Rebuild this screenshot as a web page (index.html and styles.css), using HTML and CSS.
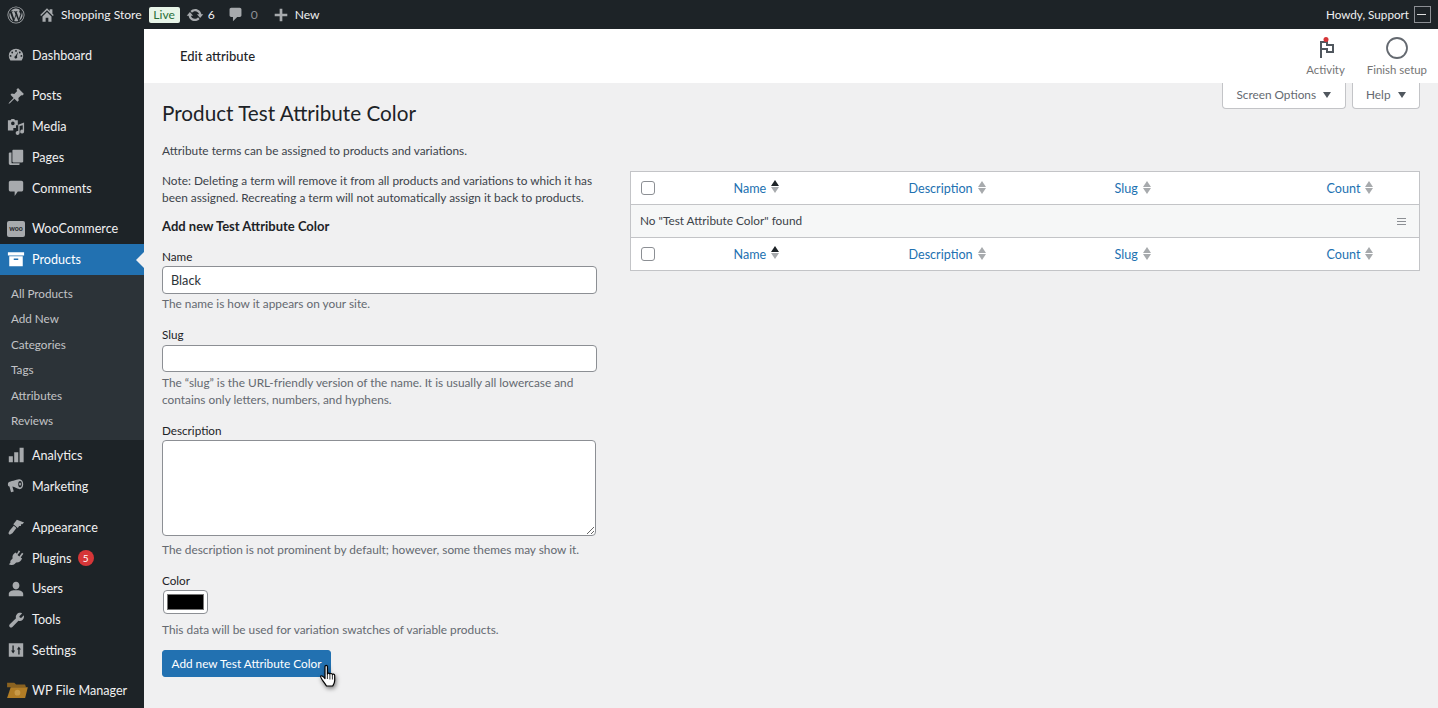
FILE: index.html
```html
<!DOCTYPE html>
<html>
<head>
  <meta charset="utf-8">
  <link rel="stylesheet" href="styles.css">
</head>
<body>
  <div class="adminbar">
    <div class="bar-left">
      <svg class="bar-logo" viewBox="0 0 20 20"><path fill-rule="evenodd" d="M10 .5a9.500 9.500 0 1 1 0 19 9.500 9.500 0 0 1 0-19zm0 .9a8.600 8.600 0 1 0 0 17.200 8.600 8.600 0 0 0 0-17.200zM2.700 10c0 2.900 1.700 5.400 4.100 6.600L3.300 7.100A7.300 7.300 0 0 0 2.700 10zm12.200-.4c0-.9-.3-1.500-.6-2-.4-.6-.7-1.100-.7-1.600 0-.7.500-1.300 1.200-1.300h.1A7.300 7.300 0 0 0 3.900 6h.5c.8 0 1.900-.1 1.900-.1.400 0 .4.600 0 .6 0 0-.4.100-.8.100l2.500 7.600 1.500-4.600-1.100-3-.7-.1c-.4 0-.3-.6 0-.6 0 0 1.200.1 1.900.1s1.900-.1 1.900-.1c.4 0 .4.600 0 .6 0 0-.4.100-.8.100l2.500 7.500.7-2.300c.3-1 .5-1.700.5-2.300zm-4.800 1-2.100 6.100a7.300 7.300 0 0 0 4.500-.1l-2.400-6zm6.300-4v.8c0 .7-.1 1.600-.6 2.600l-2.200 6.300A7.300 7.300 0 0 0 16.400 6.600z"/></svg>
      <svg class="bar-icon home" viewBox="0 0 20 20"><path d="M16 8.500l1.530 1.530-1.060 1.060L10 4.620l-6.470 6.470-1.060-1.060L10 2.500l3 3v-2h3v5zM10 6.750l5 5V17.500h-3.500V13h-3v4.500H5v-5.750z"/></svg>
      <span class="bar-text site-name">Shopping Store</span>
      <span class="live-badge">Live</span>
      <svg class="bar-icon updates" viewBox="0 0 20 20"><path d="M10.200 3.280c3.530 0 6.430 2.610 6.920 6h2.080l-3.500 4-3.500-4h2.320c-.45-1.970-2.210-3.440-4.320-3.440-1.450 0-2.730.71-3.540 1.780L4.950 5.660c1.270-1.440 3.130-2.380 5.250-2.380zm-.400 13.440c-3.520 0-6.430-2.610-6.920-6H.800l3.500-4c1.170 1.330 2.330 2.670 3.500 4H5.480c.45 1.970 2.210 3.440 4.320 3.440 1.450 0 2.730-.71 3.540-1.780l1.710 1.950c-1.270 1.440-3.130 2.390-5.250 2.390z"/></svg>
      <span class="bar-text count">6</span>
      <svg class="bar-icon comment" viewBox="0 0 20 20"><path d="M5 2h10c1.100 0 2 .9 2 2v7c0 1.100-.9 2-2 2h-3l-5 5v-5H5c-1.100 0-2-.9-2-2V4c0-1.100.9-2 2-2z"/></svg>
      <span class="bar-text zero">0</span>
      <svg class="bar-icon plus" viewBox="0 0 20 20"><path d="M8.500 3h3v5.500H17v3h-5.500V17h-3v-5.500H3v-3h5.500z"/></svg>
      <span class="bar-text new">New</span>
    </div>
    <div class="bar-right">
      <span class="bar-text howdy">Howdy, Support</span>
      <span class="avatar"><i></i></span>
    </div>
  </div>

  <div class="wrap">
    <div class="sidebar">
      <a class="menu-item"><svg viewBox="0 0 20 20"><path fill-rule="evenodd" d="M3.760 16h12.480A8 8 0 1 0 3.760 16zM10 4.500a1 1 0 1 1 0 2 1 1 0 0 1 0-2zM5.800 6.200a1 1 0 1 1 0 2 1 1 0 0 1 0-2zm8.400 0a1 1 0 1 1 0 2 1 1 0 0 1 0-2zM4 10a1 1 0 1 1 0 2 1 1 0 0 1 0-2zm12 0a1 1 0 1 1 0 2 1 1 0 0 1 0-2zM12.500 6.500l-1.500 5a1.500 1.500 0 1 1-1.700-.5z"/></svg>Dashboard</a>
      <div class="menu-sep"></div>
      <a class="menu-item"><svg viewBox="0 0 20 20"><path d="M10.440 3.020l1.820-1.820 6.530 6.530-1.820 1.820-1.170-.47-3.170 3.170.42 2.850-1.400 1.400-3.440-3.440-4.700 4.700-1.900 1 1-1.900 4.700-4.700-3.440-3.440 1.400-1.400 2.850.42 3.170-3.170z"/></svg>Posts</a>
      <a class="menu-item"><svg viewBox="0 0 20 20"><path fill-rule="evenodd" d="M1 2.500h3l1-1.500h3l1 1.500h3V8h-2v3H7v3H1zM6.500 4a2 2 0 1 0 0 4 2 2 0 0 0 0-4zM19 5v10a2.200 2.200 0 1 1-1.500-2V8L14 9v7.500a2.200 2.200 0 1 1-1.500-2V7.500z"/></svg>Media</a>
      <a class="menu-item"><svg viewBox="0 0 20 20"><path d="M7 2h10c.5 0 1 .4 1 1v12c0 .5-.5 1-1 1H7c-.5 0-1-.5-1-1V3c0-.6.500-1 1-1zM4 5h1v11c0 .6.400 1 1 1h8v1c0 .500-.4 1-1 1H4c-1 0-2-1-2-2V6c0-.6.400-1 2-1z"/></svg>Pages</a>
      <a class="menu-item"><svg viewBox="0 0 20 20"><path d="M4 2h12c1 0 2 .9 2 2v8c0 1.100-.9 2-2 2h-4l-3.500 5V14H4c-1 0-2-.9-2-2V4c0-1.100 1-2 2-2z"/></svg>Comments</a>
      <div class="menu-sep"></div>
      <a class="menu-item"><span class="woo-icon">woo</span>WooCommerce</a>
      <a class="menu-item current"><svg viewBox="0 0 20 20"><path fill-rule="evenodd" d="M1 2.500h18V6H1zM2.500 7h15v11h-15zM7.500 9.500V11h5V9.500z"/></svg>Products<span class="menu-arrow"></span></a>
      <div class="submenu">
        <a>All Products</a>
        <a>Add New</a>
        <a>Categories</a>
        <a>Tags</a>
        <a>Attributes</a>
        <a>Reviews</a>
      </div>
      <a class="menu-item"><svg viewBox="0 0 20 20"><path d="M2 11.500h4.500V18H2zM8 7h4.500v11H8zM14 2h4.500v16H14z"/></svg>Analytics</a>
      <a class="menu-item"><svg viewBox="0 0 20 20"><path fill-rule="evenodd" d="M14 2.500c2.500 0 4 2.500 4 5.500s-1.500 5.500-4 5.500c-1 0-6-2.500-8-3l1.500 5.500-3 1-1.800-6.500C1.500 10.500 1 9.500 1 8c0-1.500 1-2.500 2-2.800C5 4.500 13 2.500 14 2.500zm.5 2a2 3.500 0 1 0 0 7 2 3.500 0 0 0 0-7zm0 2a1 1.500 0 1 1 0 3 1 1.500 0 0 1 0-3z"/></svg>Marketing</a>
      <div class="menu-sep sep-tall"></div>
      <a class="menu-item"><svg viewBox="0 0 20 20"><path d="M11 2l8 3-2 2h-1.500v2h-2L12 11 7 7zM7.500 8.500l3 2.500-4.500 6-3 1.500-1.500-1.500L3 14z"/></svg>Appearance</a>
      <a class="menu-item"><svg viewBox="0 0 20 20"><path d="M13.100 1.500l1.600 1.200-3 4 2 1.500 3-4 1.500 1.200-3 4 1.500 1.100c-1.200 3-3.500 4.800-6.500 4.500l-1.700 1.700c-1.200 1.200-3.300 1.300-5 .8l-1.500-.5 1.800-1.800c-.3-1.200-.1-2.300.8-3.100l1.600-1.600c-.5-2.800.6-5 3.200-6.500l1.700 1.200z"/></svg>Plugins<span class="count-badge">5</span></a>
      <a class="menu-item"><svg viewBox="0 0 20 20"><path d="M10 2c2.200 0 3.800 1.900 3.800 4.200S12.200 10.500 10 10.500 6.200 8.500 6.200 6.200 7.800 2 10 2zm-1.500 9.500h3c3.500 0 6.500 1.700 6.500 4V18H2v-2.500c0-2.300 3-4 6.500-4z"/></svg>Users</a>
      <a class="menu-item"><svg viewBox="0 0 20 20"><path d="M16.700 2.800l-3 3 .5 1.500 1.500.5 3-3c.5 2.200-.1 4-1.500 5.200-1.300 1.100-2.900 1.300-4.500.8l-6.700 6.900c-.9.900-2.200.9-3 .1-.8-.8-.8-2.100.1-3l6.900-6.700c-.5-1.700-.2-3.400 1-4.600 1.300-1.300 3-1.800 5.200-1.200z"/></svg>Tools</a>
      <a class="menu-item"><svg viewBox="0 0 20 20"><path fill-rule="evenodd" d="M2 2.500h16v15H2zM6 5v5.500H4.500l2.300 3.500 2.200-3.500H7.500V5zm6.500 10H14v-5.500h1.500L13.200 6 11 9.500h1.500z"/></svg>Settings</a>
      <div class="menu-sep sep-short"></div>
      <a class="menu-item file-manager"><svg viewBox="0 0 24 20"><path fill="#8a6220" d="M1 2h8l2 2h10l1 3H1z"/><path fill="#b17d26" d="M5 7h19l-3 12H1z"/><circle cx="12.500" cy="13" r="3.200" fill="#c89a48"/></svg>WP File Manager</a>
    </div>

    <div class="main">
      <div class="page-header">
        <span class="page-title">Edit attribute</span>
        <div class="header-actions">
          <div class="header-action activity">
            <svg viewBox="0 0 24 24"><path fill="none" stroke="#50575e" stroke-width="2" d="M7 22V6h6v3h6v7h-6v-3H7"/><circle cx="12" cy="3.500" r="2.500" fill="#d63638"/></svg>
            <span>Activity</span>
          </div>
          <div class="header-action setup">
            <svg viewBox="0 0 24 24"><circle cx="12" cy="12" r="10" fill="none" stroke="#646970" stroke-width="1.800"/></svg>
            <span>Finish setup</span>
          </div>
        </div>
      </div>

      <div class="content">
        <div class="screen-tabs">
          <button class="screen-tab">Screen Options<span class="caret"></span></button>
          <button class="screen-tab">Help<span class="caret"></span></button>
        </div>
        <h1>Product Test Attribute Color</h1>

        <div class="columns">
          <div class="col-left">
            <p class="intro">Attribute terms can be assigned to products and variations.</p>
            <p class="note">Note: Deleting a term will remove it from all products and variations to which it has been assigned. Recreating a term will not automatically assign it back to products.</p>
            <h2>Add new Test Attribute Color</h2>

            <div class="field field-name">
              <label>Name</label>
              <input class="text-input" type="text" value="Black">
              <p class="help">The name is how it appears on your site.</p>
            </div>
            <div class="field field-slug">
              <label>Slug</label>
              <input class="text-input" type="text">
              <p class="help">The “slug” is the URL-friendly version of the name. It is usually all lowercase and contains only letters, numbers, and hyphens.</p>
            </div>
            <div class="field field-desc">
              <label>Description</label>
              <textarea class="text-area"></textarea>
              <p class="help">The description is not prominent by default; however, some themes may show it.</p>
            </div>
            <div class="field field-color">
              <label>Color</label>
              <span class="swatch"><i></i></span>
              <p class="help">This data will be used for variation swatches of variable products.</p>
            </div>
            <div class="submit-row">
              <button class="primary-button">Add new Test Attribute Color</button>
              <svg class="hand-cursor" viewBox="0 0 18 24">
                <path fill="#fff" stroke="#000" stroke-width="1.200" stroke-linejoin="round" d="M6 2.500c0-1.400 2.400-1.400 2.400 0v7.500c.3-1.200 2.400-1.200 2.500.2.300-1 2.300-1 2.500.4.400-.8 2.300-.6 2.300.8v5c0 2.500-1 4-2 5.600H7.500C6.500 20 5 18.500 3.300 16c-1-1.500-2.200-3.300-1.500-4 .8-.8 2.500.4 4.200 2.500z"/>
                <path stroke="#000" stroke-width=".8" d="M8.400 10v5M10.900 10.500v5M13.400 11v4.500"/>
              </svg>
            </div>
          </div>

          <div class="col-right">
            <table class="terms-table">
              <thead>
                <tr>
                  <th class="col-check"><span class="check"></span></th>
                  <th class="col-name"><a>Name</a><span class="sort sort-asc"><i></i><b></b></span></th>
                  <th class="col-desc"><a>Description</a><span class="sort"><i></i><b></b></span></th>
                  <th class="col-slug"><a>Slug</a><span class="sort"><i></i><b></b></span></th>
                  <th><a>Count</a><span class="sort"><i></i><b></b></span></th>
                </tr>
              </thead>
              <tbody>
                <tr class="empty-row">
                  <td colspan="5"><span>No "Test Attribute Color" found</span><span class="menu-lines"><i></i><i></i><i></i></span></td>
                </tr>
              </tbody>
              <tfoot>
                <tr>
                  <th><span class="check"></span></th>
                  <th><a>Name</a><span class="sort sort-asc"><i></i><b></b></span></th>
                  <th><a>Description</a><span class="sort"><i></i><b></b></span></th>
                  <th><a>Slug</a><span class="sort"><i></i><b></b></span></th>
                  <th><a>Count</a><span class="sort"><i></i><b></b></span></th>
                </tr>
              </tfoot>
            </table>
          </div>
        </div>
      </div>
    </div>
  </div>
</body>
</html>
```

FILE: styles.css
```css
* {
  box-sizing: border-box;
}

html, body {
  height: 708px;
  overflow: hidden;
}

body {
  margin: 0;
  font-family: Lato, "Noto Sans", sans-serif;
  font-size: 12px;
  color: #3c434a;
  background: #f0f0f1;
}

/* top bar */
.adminbar {
  height: 29px;
  background: #1d2327;
  color: #f0f0f1;
  display: flex;
  justify-content: space-between;
  align-items: center;
  padding: 0 7px;
}

.bar-left,
.bar-right {
  display: flex;
  align-items: center;
}

.bar-logo {
  width: 18px;
  height: 18px;
  fill: #a7aaad;
  margin-right: 13px;
}

.bar-icon {
  width: 18px;
  height: 18px;
  fill: #a7aaad;
}

.bar-icon.home {
  margin-right: 5px;
}

.bar-text {
  font-size: 12.100px;
  line-height: 29px;
  white-space: nowrap;
}

.howdy {
  font-size: 11.700px;
}

.live-badge {
  margin-left: 7px;
  height: 16px;
  width: 31px;
  background: #e7f4e8;
  color: #2a6f38;
  font-size: 12.100px;
  line-height: 15px;
  text-align: center;
  border-radius: 2px;
}

.bar-icon.updates {
  margin-left: 6px;
}

.count {
  margin-left: 4px;
}

.bar-icon.comment {
  margin-left: 12px;
  width: 17px;
  height: 17px;
}

.zero {
  margin-left: 7px;
  color: #8c8f94;
}

.bar-icon.plus {
  margin-left: 14px;
}

.new {
  margin-left: 5px;
}

.avatar {
  width: 17px;
  height: 17px;
  margin-left: 5px;
  background: #1d2327;
  border: 1px solid #8c8f94;
  display: flex;
  align-items: center;
  padding-left: 2px;
}

.avatar i {
  display: block;
  width: 9px;
  height: 1px;
  background: #ddd;
}

/* layout */
.wrap {
  display: flex;
  height: 679px;
}

.sidebar {
  width: 144px;
  flex: none;
  background: #1d2327;
  padding-top: 11px;
}

.menu-item {
  position: relative;
  display: flex;
  align-items: center;
  height: 30.8px;
  padding-left: 7px;
  color: #f0f0f1;
  font-size: 12.600px;
  white-space: nowrap;
}

.menu-item svg {
  width: 18px;
  height: 18px;
  fill: #a7aaad;
  margin-right: 7px;
  flex: none;
}

.menu-sep {
  height: 9.600px;
}

.sep-tall {
  height: 10.200px;
}

.sep-short {
  height: 9px;
}

.woo-icon {
  width: 18px;
  height: 16px;
  margin-right: 7px;
  background: #a7aaad;
  border-radius: 2px;
  color: #1d2327;
  font-size: 7px;
  font-weight: 700;
  line-height: 15px;
  text-align: center;
  flex: none;
}

.menu-item.current {
  background: #2271b1;
  color: #fff;
}

.menu-item.current svg {
  fill: #fff;
}

.menu-arrow {
  position: absolute;
  right: 0;
  top: 8px;
  border: 8px solid transparent;
  border-right-color: #f0f0f1;
  border-left-width: 0;
}

.submenu {
  background: #2c3338;
  padding: 6.300px 0 6.700px;
}

.submenu a {
  display: block;
  height: 25.400px;
  line-height: 25.400px;
  padding-left: 11px;
  color: #c3c4c7;
  font-size: 11.700px;
}

.count-badge {
  width: 16px;
  height: 16px;
  margin-left: 6px;
  border-radius: 50%;
  background: #d63638;
  color: #fff;
  font-size: 10px;
  line-height: 16px;
  text-align: center;
}

.file-manager svg {
  width: 22px;
  margin-left: -1px;
  margin-right: 4px;
}

.main {
  flex: 1;
  min-width: 0;
}

/* white header */
.page-header {
  height: 54px;
  background: #fff;
  display: flex;
  justify-content: space-between;
  padding-left: 36px;
}

.page-title {
  font-size: 13px;
  font-weight: 500;
  color: #1d2327;
  line-height: 55px;
}

.header-actions {
  display: flex;
}

.header-action {
  display: flex;
  flex-direction: column;
  align-items: center;
  color: #757575;
  font-size: 11.400px;
}

.header-action svg {
  width: 24px;
  height: 24px;
  margin-top: 7px;
  margin-bottom: 3px;
}

.header-action.activity {
  margin-right: 22px;
}

.header-action.setup {
  margin-right: 11px;
}

/* page content */
.content {
  padding: 0 18px;
}

.screen-tabs {
  float: right;
  display: flex;
  gap: 6px;
}

.screen-tab {
  height: 26px;
  padding: 0 13.500px 2px;
  background: #fff;
  border: 1px solid #c3c4c7;
  border-top: none;
  border-radius: 0 0 4px 4px;
  color: #646970;
  font-family: inherit;
  font-size: 11.800px;
}

.caret {
  display: inline-block;
  margin-left: 7px;
  border: 4px solid transparent;
  border-top: 6px solid #50575e;
  border-bottom-width: 0;
  vertical-align: 1px;
}

h1 {
  margin: 0;
  padding-top: 15px;
  font-size: 20.700px;
  font-weight: 400;
  line-height: 30px;
  color: #1d2327;
}

.columns {
  display: flex;
  gap: 33px;
}

.col-left {
  width: 435px;
  flex: none;
}

.col-right {
  flex: 1;
  padding-top: 43px;
}

p {
  margin: 0;
}

.intro {
  margin-top: 14px;
  font-size: 11.850px;
  line-height: 17px;
}

.note {
  margin-top: 13px;
  font-size: 11.850px;
  line-height: 17px;
}

h2 {
  margin: 10px 0 0;
  font-size: 13px;
  font-weight: 700;
  line-height: 20px;
  color: #1d2327;
}

.field {
  margin-top: 12px;
}

.field label {
  display: block;
  font-size: 11.700px;
  line-height: 17px;
  color: #1d2327;
}

.text-input {
  display: block;
  width: 435px;
  height: 28px;
  margin-top: 1px;
  padding: 0 8px;
  border: 1px solid #8c8f94;
  border-radius: 4px;
  background: #fff;
  color: #2c3338;
  font-family: inherit;
  font-size: 12.700px;
}

.text-area {
  display: block;
  width: 434px;
  height: 96px;
  margin-top: 1px;
  border: 1px solid #8c8f94;
  border-radius: 4px;
  background: #fff;
}

.help {
  margin-top: 1px;
  font-size: 11.850px;
  line-height: 17px;
  color: #646970;
}

.field-slug {
  margin-top: 14px;
}

.field-slug .text-input {
  height: 27px;
  margin-top: 2px;
}

.field-slug .help {
  margin-top: 2px;
}

.field-desc {
  margin-top: 14px;
}

.field-desc .help {
  margin-top: 5px;
}

.field-color {
  margin-top: 14px;
}

.swatch {
  display: block;
  width: 45px;
  height: 24px;
  margin-top: 1px;
  margin-left: 1px;
  padding: 3px;
  background: #fff;
  border: 1px solid #8c8f94;
  border-radius: 4px;
}

.swatch i {
  display: block;
  height: 100%;
  background: #000;
  border: 1px solid #767676;
}

.field-color .help {
  margin-top: 7px;
}

.submit-row {
  position: relative;
  margin-top: 12px;
}

.primary-button {
  display: block;
  height: 27px;
  width: 169px;
  padding: 0;
  background: #2271b1;
  border: 1px solid #2271b1;
  border-radius: 3px;
  color: #fff;
  font-family: inherit;
  font-size: 11.800px;
}

.hand-cursor {
  position: absolute;
  left: 157px;
  top: 14px;
  width: 18px;
  height: 24px;
  filter: drop-shadow(1px 2px 2px rgba(0,0,0,0.5));
}

/* terms table */
.terms-table {
  width: 100%;
  table-layout: fixed;
  border-collapse: collapse;
  background: #fff;
  border: 1px solid #c3c4c7;
}

.terms-table th {
  height: 33px;
  padding: 0;
  font-weight: 400;
  text-align: left;
  font-size: 12.600px;
  color: #2271b1;
}

.terms-table thead tr,
.terms-table tfoot tr {
  border: 1px solid #c3c4c7;
}

.col-check {
  width: 103px;
}

.col-name {
  width: 175px;
}

.col-desc {
  width: 206px;
}

.col-slug {
  width: 212px;
}

.check {
  display: block;
  width: 14px;
  height: 14px;
  margin-left: 10px;
  background: #fff;
  border: 1px solid #8c8f94;
  border-radius: 3px;
}

.sort {
  display: inline-block;
  margin-left: 5px;
  vertical-align: -1px;
}

.sort i,
.sort b {
  display: block;
  width: 0;
  height: 0;
  border: 4px solid transparent;
  border-top-width: 0;
  border-bottom: 6px solid #a7aaad;
}

.sort b {
  margin-top: 1px;
  border-bottom-width: 0;
  border-top: 6px solid #a7aaad;
}

.sort-asc {
  vertical-align: 0;
}

.sort-asc i {
  border-bottom-color: #1d2327;
}

.empty-row td {
  position: relative;
  height: 33px;
  padding: 0 13px 2px 9px;
  background: #f6f7f7;
  font-size: 11.800px;
}

.menu-lines {
  position: absolute;
  right: 13px;
  top: 13px;
  width: 9px;
}

.menu-lines i {
  display: block;
  height: 1px;
  margin-bottom: 2px;
  background: #8c8f94;
}
```
